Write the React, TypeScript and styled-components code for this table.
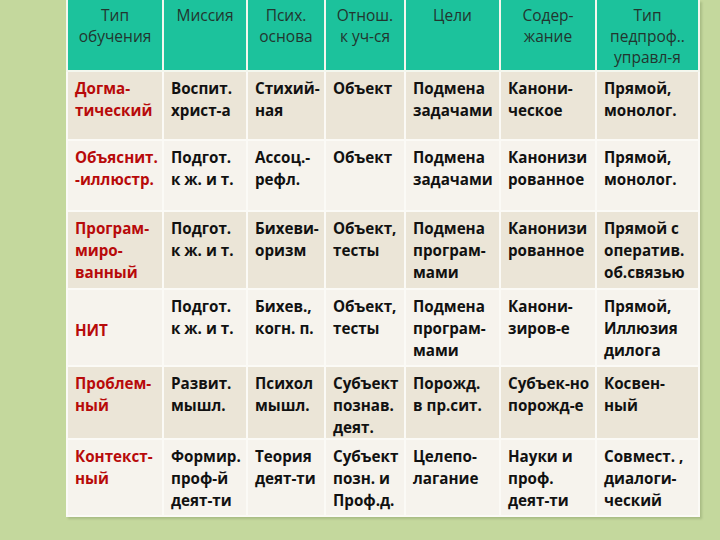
import React from 'react';
import styled, { createGlobalStyle } from 'styled-components';

const GlobalStyle = createGlobalStyle`
  html, body {
    margin: 0;
    padding: 0;
    background: #c4d89d;
  }
  body {
    width: 720px;
    height: 540px;
    overflow: hidden;
    font-family: "Open Sans", "Noto Sans", "DejaVu Sans", sans-serif;
  }
`;

const Page = styled.div`
  width: 720px;
  height: 540px;
  display: flex;
  justify-content: flex-start;
  padding-left: 66px;
  box-sizing: border-box;
`;

const Table = styled.table`
  border-collapse: collapse;
  table-layout: fixed;
  width: 632px;
  height: 516px;
  box-shadow: 2px 2px 2px rgba(120, 140, 90, 0.35);
  border-bottom: 2px solid #fbfaf6;
`;

const Col = styled.col<{ $w: number }>`
  width: ${(p) => p.$w}px;
`;

const HeadRow = styled.tr`
  height: 71px;
`;

const HeadCell = styled.th`
  background: #1cc29c;
  color: #22352f;
  font-weight: 400;
  font-size: 15.5px;
  line-height: 21px;
  text-align: center;
  vertical-align: top;
  padding: 5px 4px 0;
  border: 2px solid #f4f7ee;
  border-top: none;
  white-space: pre-line;
`;

const Row = styled.tr<{ $shade: boolean; $h: number }>`
  height: ${(p) => p.$h}px;
  background: ${(p) => (p.$shade ? '#ebe5d7' : '#f6f3ed')};
`;

const Cell = styled.td<{ $red?: boolean; $middle?: boolean }>`
  color: ${(p) => (p.$red ? '#b80a0a' : '#111')};
  font-weight: 700;
  font-size: 15.2px;
  line-height: 22px;
  text-align: left;
  vertical-align: ${(p) => (p.$middle ? 'middle' : 'top')};
  padding: 5px 2px 0 7px;
  border: 2px solid #fbfaf6;
  white-space: pre-line;
`;

const widths = [96, 84, 78, 80, 95, 96, 103];

const header = [
  'Тип\nобучения',
  'Миссия',
  'Псих.\nоснова',
  'Отнош.\nк уч-ся',
  'Цели',
  'Содер-\nжание',
  'Тип\nпедпроф..\nуправл-я',
];

const rows: { h: number; cells: string[]; middleFirst?: boolean }[] = [
  {
    h: 69,
    cells: ['Догма-\nтический', 'Воспит.\nхрист-а', 'Стихий-\nная', 'Объект', 'Подмена\nзадачами', 'Канони-\nческое', 'Прямой,\nмонолог.'],
  },
  {
    h: 71,
    cells: ['Объяснит.\n-иллюстр.', 'Подгот.\nк ж. и т.', 'Ассоц.-\nрефл.', 'Объект', 'Подмена\nзадачами', 'Канонизи\nрованное', 'Прямой,\nмонолог.'],
  },
  {
    h: 78,
    cells: ['Програм-\nмиро-\nванный', 'Подгот.\nк ж. и т.', 'Бихеви-\nоризм', 'Объект,\nтесты', 'Подмена\nпрограм-\nмами', 'Канонизи\nрованное', 'Прямой с\nоператив.\nоб.связью'],
  },
  {
    h: 77,
    middleFirst: true,
    cells: ['НИТ', 'Подгот.\nк ж. и т.', 'Бихев.,\nкогн. п.', 'Объект,\nтесты', 'Подмена\nпрограм-\nмами', 'Канони-\nзиров-е', 'Прямой,\nИллюзия\nдилога'],
  },
  {
    h: 72,
    cells: ['Проблем-\nный', 'Развит.\nмышл.', 'Психол\nмышл.', 'Субъект\nпознав.\nдеят.', 'Порожд.\nв пр.сит.', 'Субъек-но\nпорожд-е', 'Косвен-\nный'],
  },
  {
    h: 77,
    cells: ['Контекст-\nный', 'Формир.\nпроф-й\nдеят-ти', 'Теория\nдеят-ти', 'Субъект\nпозн. и\nПроф.д.', 'Целепо-\nлагание', 'Науки и\nпроф.\nдеят-ти', 'Совмест. ,\nдиалоги-\nческий'],
  },
];

export default function App() {
  return (
    <>
      <GlobalStyle />
      <Page>
        <Table>
          <colgroup>
            {widths.map((w, i) => (
              <Col key={i} $w={w} />
            ))}
          </colgroup>
          <thead>
            <HeadRow>
              {header.map((t, i) => (
                <HeadCell key={i}>{t}</HeadCell>
              ))}
            </HeadRow>
          </thead>
          <tbody>
            {rows.map((r, ri) => (
              <Row key={ri} $shade={ri % 2 === 0} $h={r.h}>
                {r.cells.map((c, ci) => (
                  <Cell key={ci} $red={ci === 0} $middle={ci === 0 && r.middleFirst}>
                    {c}
                  </Cell>
                ))}
              </Row>
            ))}
          </tbody>
        </Table>
      </Page>
    </>
  );
}
